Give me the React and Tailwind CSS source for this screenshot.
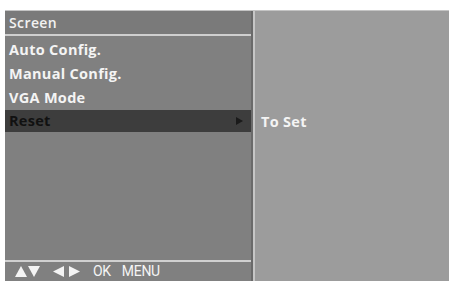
export default function App() {
  const font = { fontFamily: '"Open Sans", "DejaVu Sans", sans-serif' };
  return (
    <div className="w-[451px] h-[281px] bg-white pt-[10px] pl-[5px] pr-[2px] overflow-hidden" style={font}>
      <div className="flex h-[271px] border-t border-[#c4c4c4]">
        <div className="w-[246px] flex flex-col bg-[#808080]">
          <div className="h-[23px] flex items-center px-[4px] bg-[#7a7a7a] text-[#f2f2f2] text-[14px] font-semibold tracking-[0.4px]">
            Screen
          </div>
          <div className="h-[2px] bg-[#cfcfcf]" />
          <div className="flex flex-col pt-[2px]">
            <div className="h-[24px] flex items-center px-[4px] text-[#f4f4f4] text-[14.5px] font-bold tracking-[0.3px]">Auto Config.</div>
            <div className="h-[24px] flex items-center px-[4px] text-[#f4f4f4] text-[14.5px] font-bold tracking-[0.3px]">Manual Config.</div>
            <div className="h-[24px] flex items-center px-[4px] text-[#f4f4f4] text-[14.5px] font-bold tracking-[0.3px]">VGA Mode</div>
            <div className="h-[22px] flex items-center justify-between pl-[4px] pr-[8px] bg-[#3d3d3d] text-[#111] text-[14.5px] font-bold tracking-[0.3px]">
              <span>Reset</span>
              <svg width="7" height="8" viewBox="0 0 7 8"><path d="M0 0 L7 4 L0 8 Z" fill="#1a1a1a" /></svg>
            </div>
          </div>
          <div className="flex-1" />
          <div className="h-[2px] bg-[#d0d0d0]" />
          <div className="h-[19px] flex items-center pl-[10px] text-[#f4f4f4] text-[14px]" style={{ fontFamily: 'Roboto, sans-serif' }}>
            <svg width="26" height="11" viewBox="0 0 26 11">
              <path d="M0 11 L6 0 L12 11 Z" fill="#f4f4f4" />
              <path d="M13 0 L25 0 L19 11 Z" fill="#f4f4f4" />
            </svg>
            <svg width="28" height="11" viewBox="0 0 28 11" className="ml-[12px]">
              <path d="M11 0 L0 5.5 L11 11 Z" fill="#f4f4f4" />
              <path d="M16 0 L27 5.5 L16 11 Z" fill="#f4f4f4" />
            </svg>
            <span className="ml-[12px] tracking-[-0.3px]">OK</span>
            <span className="ml-[11px] tracking-[-0.3px]">MENU</span>
          </div>
        </div>
        <div className="w-[2px] bg-[#6a6a6a]" />
        <div className="w-[2px] bg-[#c6c6c6]" />
        <div className="flex-1 flex flex-col bg-[#9c9c9c] pt-[100px] pl-[6px]">
          <div className="h-[22px] flex items-center text-[#f4f4f4] text-[14.5px] font-bold tracking-[0.3px]">To Set</div>
        </div>
      </div>
    </div>
  );
}
